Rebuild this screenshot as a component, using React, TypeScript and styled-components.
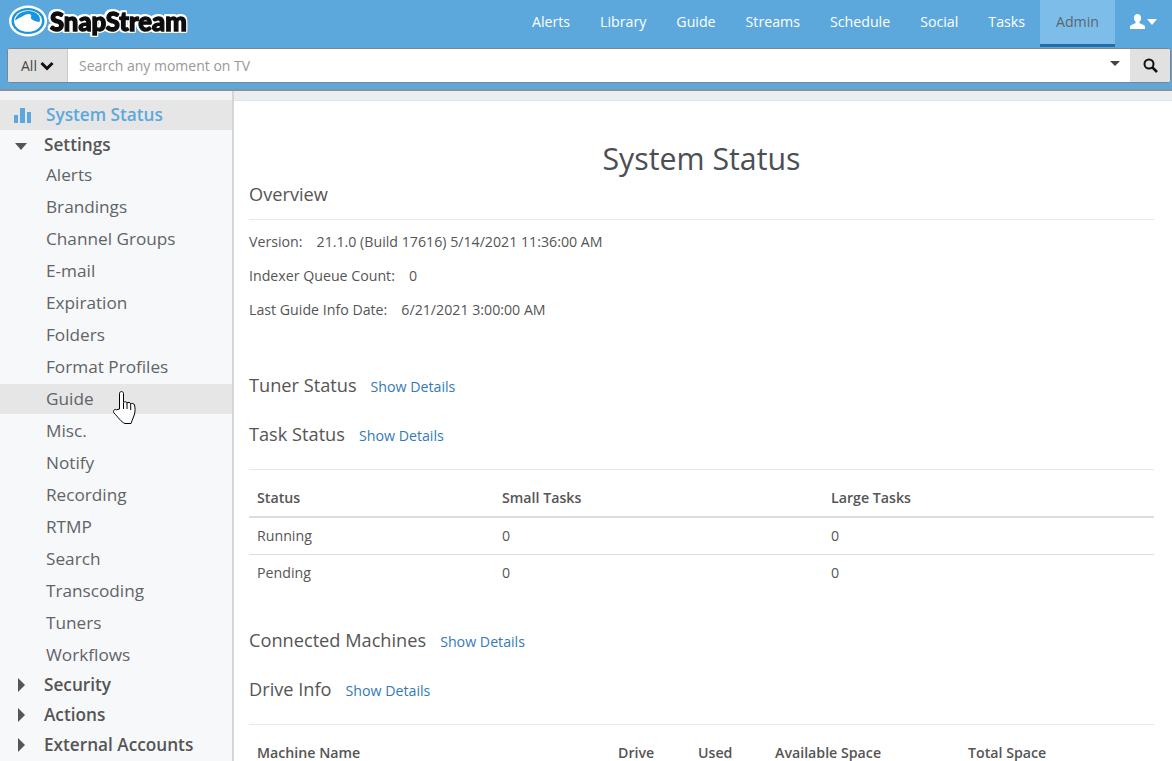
import React from 'react';
import styled, { createGlobalStyle } from 'styled-components';

const Global = createGlobalStyle`
  html, body { margin: 0; padding: 0; height: 100%; overflow: hidden; background: #fff; }
  * { box-sizing: border-box; }
  body { font-family: "Open Sans", "Liberation Sans", sans-serif; color: #555; font-size: 14.2px; }
`;

const Page = styled.div`
  width: 1172px; height: 761px; overflow: hidden; display: flex; flex-direction: column; position: relative;
`;
const Header = styled.header`
  height: 91px; flex: none; background: #5ca8dd; border-bottom: 2px solid #8c9196; display: flex; flex-direction: column;
`;
const TopBar = styled.div`
  height: 47px; display: flex; align-items: flex-start; justify-content: space-between; padding-left: 9px;
`;
const Logo = styled.div`
  display: flex; align-items: center; gap: 3px; height: 32px; margin-top: 5px;
`;
const LogoText = styled.span`
  font-family: "Lato", sans-serif; font-weight: 900; font-size: 25.6px; color: #0d0d0d;
  -webkit-text-stroke: 1.3px #0d0d0d; line-height: 32px;
  filter: drop-shadow(1.5px 0 0 #fff) drop-shadow(-1.5px 0 0 #fff) drop-shadow(0 1.5px 0 #fff) drop-shadow(0 -1.5px 0 #fff);
`;
const Nav = styled.nav`
  display: flex; height: 47px;
`;
const NavItem = styled.a<{ $active?: boolean }>`
  display: flex; align-items: center; justify-content: center; height: 47px; padding: 0 15px 2px; font-size: 14.2px; font-weight: 500;
  color: ${p => (p.$active ? '#5c6670' : '#fff')};
  background: ${p => (p.$active ? '#7dbde9' : 'transparent')};
  border-bottom: 3px solid ${p => (p.$active ? '#246da6' : 'transparent')};
  ${p => (p.$active ? 'width: 75px;' : '')}
`;
const UserItem = styled.a`
  display: flex; align-items: center; gap: 2px; width: 57px; padding: 0 0 4px 15px; height: 47px; color: #fff;
`;
const SearchBar = styled.div`
  height: 35px; margin: 1px 0 0 7px; width: 1164px; display: flex; border: 1px solid #80858a; border-radius: 3px; overflow: hidden; background: #fff;
`;
const AllButton = styled.div`
  width: 60px; background: #e1e1e1; color: #444; display: flex; align-items: center; gap: 3px; padding-left: 13px; font-size: 14px; border-right: 1px solid #ccc;
`;
const SearchField = styled.div`
  flex: 1; padding-left: 11px; display: flex; align-items: center; color: #999; font-size: 14px; position: relative;
`;
const Caret = styled.span`
  position: absolute; right: 10px; top: 12px; width: 0; height: 0; border-left: 5px solid transparent; border-right: 5px solid transparent; border-top: 5px solid #444;
`;
const SearchButton = styled.div`
  width: 40px; background: #e1e1e1; display: flex; align-items: center; justify-content: center; color: #111;
`;
const Body = styled.div`
  flex: 1; display: flex; min-height: 0;
`;
const Sidebar = styled.aside`
  width: 234px; flex: none; background: #f7f8fa; border-right: 2px solid #d4d6d8; overflow: hidden;
`;
const SideStrip = styled.div`
  height: 9px; background: #f2f3f5;
`;
const SideTop = styled.a`
  display: flex; align-items: center; height: 30px; padding: 0 0 2px 46px; font-size: 17.2px; font-weight: 600; color: #5ca8dd; background: #e6e6e6; position: relative;
`;
const SideIcon = styled.span`
  position: absolute; left: 14px; top: 7px; display: flex;
`;
const SideGroup = styled.a`
  display: flex; align-items: center; height: 30px; padding: 0 0 2px 44px; font-size: 17.2px; font-weight: 600; color: #555; position: relative;
`;
const Arrow = styled.span<{ $open?: boolean }>`
  position: absolute; width: 0; height: 0;
  ${p => p.$open
    ? 'left: 15px; top: 13px; border-left: 6.5px solid transparent; border-right: 6.5px solid transparent; border-top: 7px solid #555;'
    : 'left: 18px; top: 8px; border-top: 7px solid transparent; border-bottom: 7px solid transparent; border-left: 7px solid #555;'}
`;
const SideLink = styled.a<{ $hover?: boolean }>`
  display: flex; align-items: center; height: 30px; padding: 0 0 2px 46px; font-size: 17.2px; color: #5f6468; background: ${p => (p.$hover ? '#e6e6e6' : 'transparent')};
  &:not(:last-of-type) { margin-bottom: 2px; }
`;
const SideList = styled.div`
  display: flex; flex-direction: column;
`;
const Main = styled.main`
  flex: 1; min-width: 0; display: flex; flex-direction: column;
`;
const MainStrip = styled.div`
  height: 10px; flex: none; background: #ebeef0; border-bottom: 1px solid #e2e4e6;
`;
const Content = styled.div`
  padding: 0 18px 0 15px;
`;
const Title = styled.h1`
  margin: 40px 0 0; font-size: 30.3px; font-weight: 400; line-height: 36px; text-align: center; color: #4b4f53;
`;
const SectionHead = styled.div`
  display: flex; align-items: baseline; gap: 14px; height: 24px;
`;
const SectionTitle = styled.h2`
  margin: 0; font-size: 18.2px; font-weight: 400; line-height: 24px; color: #555;
`;
const Detail = styled.a`
  color: #337ab7; font-size: 14.2px;
`;
const Rule = styled.div`
  height: 1px; background: #e8e8e8;
`;
const Stat = styled.div`
  height: 34px; display: flex; align-items: center; font-size: 14.2px; color: #555; gap: 14px;
`;
const Table = styled.div<{ $cols: string }>`
  display: grid; grid-template-columns: ${p => p.$cols};
`;
const Th = styled.div`
  height: 48px; padding: 9px 8px 0; display: flex; align-items: center; font-weight: 600; font-size: 14.2px; color: #555; border-bottom: 2px solid #ddd;
`;
const Td = styled.div`
  height: 37px; padding: 0 8px 2px; display: flex; align-items: center; font-size: 14.2px; color: #555; border-bottom: 1px solid #ddd;
`;
const TdLast = styled(Td)`
  border-bottom: none;
`;
const Hand = styled.svg`
  position: absolute; left: 112px; top: 390px; pointer-events: none;
`;

const settings = ['Alerts','Brandings','Channel Groups','E-mail','Expiration','Folders','Format Profiles','Guide','Misc.','Notify','Recording','RTMP','Search','Transcoding','Tuners','Workflows'];
const navs = ['Alerts','Library','Guide','Streams','Schedule','Social','Tasks'];

const Section = ({ title, gap }: { title: string; gap: number }) => (
  <SectionHead style={{ marginTop: gap }}>
    <SectionTitle>{title}</SectionTitle>
    <Detail>Show Details</Detail>
  </SectionHead>
);

export default function App() {
  return (
    <Page>
      <Global />
      <Header>
        <TopBar>
          <Logo>
            <svg width="38" height="32" viewBox="0 0 38 31">
              <ellipse cx="19" cy="15.5" rx="19" ry="15.5" fill="#fff" />
              <ellipse cx="19" cy="15.5" rx="16.5" ry="13" fill="#1c94dc" />
              <ellipse cx="19" cy="15.5" rx="14" ry="10.8" fill="#fff" />
              <path d="M6 15C7 9 13 5.500 19 5.500c5 0 10 2 11.500 6 .7 2 .5 3.500 0 5-2 0-6-1-8-3-1.500-1.500 1-3-1-4.500-2-1-5 0-7.500 1.500-3 1.800-6 3-8 4.500z" fill="#1c94dc" />
              <path d="M22 15c2 2 5 3 8 2-1 5-6 8-11 8-3 0-6-1-8-3 4 0 8-1 10-3 1.500-1.500 2-3 1-4z" fill="#fff" />
            </svg>
            <LogoText>SnapStream</LogoText>
          </Logo>
          <Nav>
            {navs.map(n => <NavItem key={n}>{n}</NavItem>)}
            <NavItem $active>Admin</NavItem>
            <UserItem>
              <svg width="15" height="15" viewBox="0 0 16 16" fill="#fff"><path d="M8 0c2.400 0 3.800 1.800 3.800 4.200 0 1.800-.8 3.400-1.800 4.300v1.200l5 2.300c.7.4 1 1 1 1.700V16H0v-2.300c0-.7.3-1.300 1-1.700l5-2.300V8.500C5 7.600 4.200 6 4.200 4.200 4.200 1.800 5.600 0 8 0z"/></svg>
              <svg width="10" height="6" viewBox="0 0 10 6" fill="#fff"><path d="M0 0h10L5 6z"/></svg>
            </UserItem>
          </Nav>
        </TopBar>
        <SearchBar>
          <AllButton>
            All
            <svg width="14" height="10" viewBox="0 0 14 10" fill="none" stroke="#111" strokeWidth="3"><path d="M1.500 2l5.500 5.500L12.500 2"/></svg>
          </AllButton>
          <SearchField>Search any moment on TV<Caret /></SearchField>
          <SearchButton>
            <svg width="15" height="15" viewBox="0 0 15 15" fill="none" stroke="#111" strokeWidth="2"><circle cx="6" cy="6" r="4.500"/><path d="M9.500 9.500L14 14" strokeWidth="2.500"/></svg>
          </SearchButton>
        </SearchBar>
      </Header>
      <Body>
        <Sidebar>
          <SideStrip />
          <SideTop>
            <SideIcon>
              <svg width="17" height="16" viewBox="0 0 17 16" fill="#5ca8dd"><rect x="0" y="8" width="4" height="8"/><rect x="6" y="1" width="5" height="15"/><rect x="13" y="5" width="4" height="11"/></svg>
            </SideIcon>
            System Status
          </SideTop>
          <SideGroup><Arrow $open />Settings</SideGroup>
          <SideList>
            {settings.map(s => <SideLink key={s} $hover={s === 'Guide'}>{s}</SideLink>)}
          </SideList>
          <SideGroup><Arrow />Security</SideGroup>
          <SideGroup><Arrow />Actions</SideGroup>
          <SideGroup><Arrow />External Accounts</SideGroup>
        </Sidebar>
        <Main>
          <MainStrip />
          <Content>
            <Title>System Status</Title>
            <SectionTitle style={{ marginTop: 5 }}>Overview</SectionTitle>
            <Rule style={{ marginTop: 13 }} />
            <Stat style={{ marginTop: 4 }}><span>Version:</span><span>21.1.0 (Build 17616) 5/14/2021 11:36:00 AM</span></Stat>
            <Stat><span>Indexer Queue Count:</span><span>0</span></Stat>
            <Stat><span>Last Guide Info Date:</span><span>6/21/2021 3:00:00 AM</span></Stat>
            <Section title="Tuner Status" gap={47} />
            <Section title="Task Status" gap={25} />
            <Rule style={{ marginTop: 23 }} />
            <Table $cols="245px 329px 1fr">
              <Th>Status</Th><Th>Small Tasks</Th><Th>Large Tasks</Th>
              <Td>Running</Td><Td>0</Td><Td>0</Td>
              <TdLast>Pending</TdLast><TdLast>0</TdLast><TdLast>0</TdLast>
            </Table>
            <Section title="Connected Machines" gap={36} />
            <Section title="Drive Info" gap={25} />
            <Rule style={{ marginTop: 23 }} />
            <Table $cols="361px 80px 77px 193px 1fr">
              <Th>Machine Name</Th><Th>Drive</Th><Th>Used</Th><Th>Available Space</Th><Th>Total Space</Th>
            </Table>
          </Content>
        </Main>
      </Body>
      <Hand width="27" height="36" viewBox="0 0 27 36">
        <path d="M7.500 19V3.500c0-2.600 4-2.600 4 0V12.500c1-1 3-1 3.500.5 1-1 3.200-.8 3.700.8 1-.8 3.300-.5 3.800 1.200.8 3 .7 6 0 9-.6 2.500-2 5-3.500 9.500H13c-4-1.500-7-6.500-11-10.500-1.500-1.800.5-4.500 2.500-3.200z" fill="#fff" stroke="#000" strokeWidth="1"/>
        <path d="M11.500 13v6M15 13v6M18.700 14v6" stroke="#000" strokeWidth="1" fill="none"/>
      </Hand>
    </Page>
  );
}
